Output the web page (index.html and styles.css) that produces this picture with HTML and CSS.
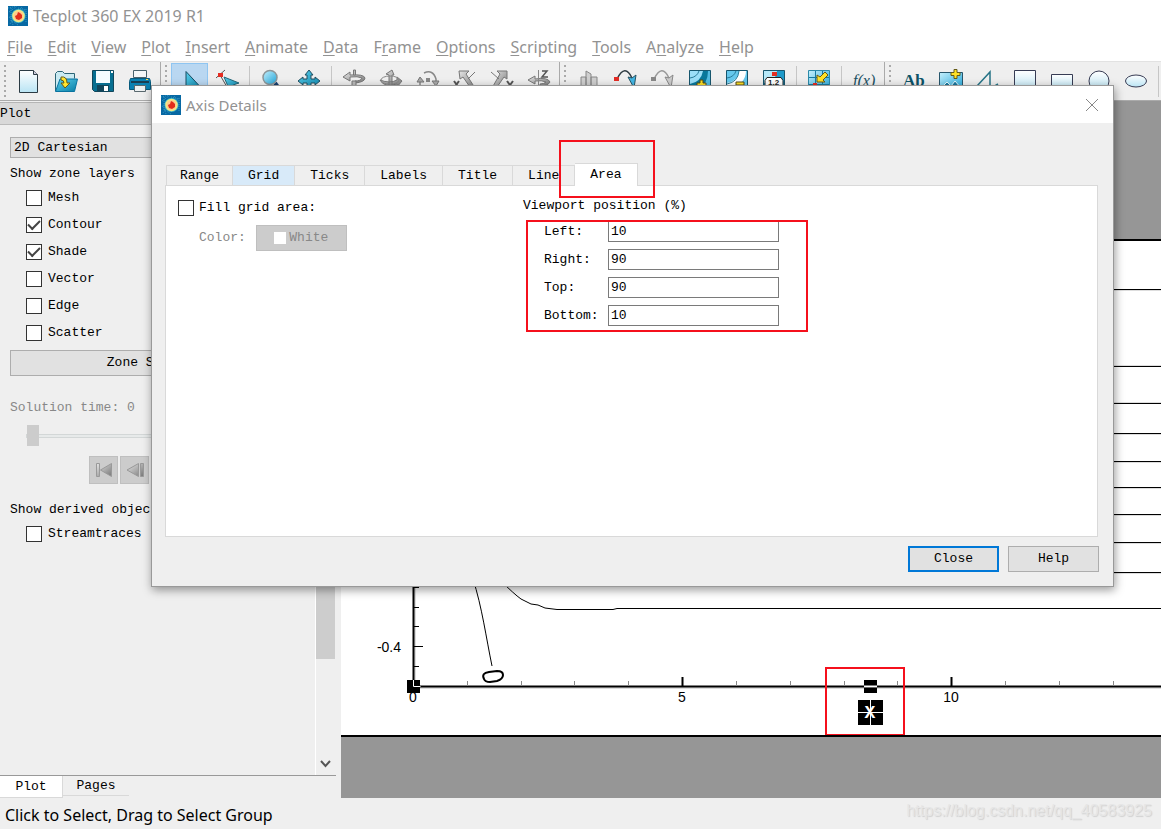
FILE: index.html
```
<!DOCTYPE html>
<html lang="en">
<head>
<meta charset="utf-8">
<title>Tecplot 360 EX 2019 R1</title>
<link rel="stylesheet" href="styles.css">
</head>
<body>
<svg class="defs" aria-hidden="true">
  <defs>
    <linearGradient id="sky" x1="0" y1="0" x2="1" y2="1"><stop offset="0" stop-color="#c4effc"/><stop offset="1" stop-color="#1ea4d8"/></linearGradient>
    <linearGradient id="pale" x1="0" y1="0" x2="0" y2="1"><stop offset="0" stop-color="#fff"/><stop offset="1" stop-color="#b9e4f4"/></linearGradient>
    <linearGradient id="steel" x1="0" y1="0" x2="1" y2="1"><stop offset="0" stop-color="#e6e6e6"/><stop offset="1" stop-color="#777"/></linearGradient>
    <linearGradient id="teal" x1="0" y1="0" x2="1" y2="1"><stop offset="0" stop-color="#5bd0ec"/><stop offset="1" stop-color="#087ea6"/></linearGradient>
    <symbol id="logo" viewBox="0 0 20 20">
      <path fill="#0768a3" d="M0 0h20v20H0z"/>
      <path stroke="#3097c4" stroke-dasharray="1 1" d="M0 2l9-2M1 6l7-5M1 12l6-8M2 18l4-7M5 19l-3-9M10 19l-6-4M13 1l6 7M10 2l8 2M18 3v13M3 2v14"/>
      <circle cx="10.500" cy="10" r="7" fill="#42b8c7"/>
      <circle cx="10.500" cy="10" r="6.200" fill="#f5e884"/>
      <circle cx="10.500" cy="10" r="4.800" fill="#ffc98b"/>
      <path fill="#e12d1b" d="M10 6l2 1 2 2v3l-3 2-3-1-1-3 2-1z"/>
    </symbol>
  </defs>
</svg>
<div class="app">
  <header class="titlebar"><svg class="logo"><use href="#logo"/></svg><span>Tecplot 360 EX 2019 R1</span></header>
  <nav class="menubar">
    <a href="#file"><u>F</u>ile</a><a href="#edit"><u>E</u>dit</a><a href="#view"><u>V</u>iew</a><a href="#plot"><u>P</u>lot</a><a href="#insert"><u>I</u>nsert</a><a href="#animate"><u>A</u>nimate</a><a href="#data"><u>D</u>ata</a><a href="#frame">F<u>r</u>ame</a><a href="#options"><u>O</u>ptions</a><a href="#scripting"><u>S</u>cripting</a><a href="#tools"><u>T</u>ools</a><a href="#analyze">A<u>n</u>alyze</a><a href="#help"><u>H</u>elp</a>
  </nav>
  <div class="toolbar" role="toolbar" aria-label="Main tools">
    <div class="tool-group">
      <i class="grip"></i>
      <button class="tool" aria-label="New layout"><svg viewBox="0 0 24 24"><path fill="url(#pale)" stroke="#2b3b44" d="M2.500 1.500h14l4 4v18h-18z"/><path fill="#ccd" stroke="#2b3b44" d="M16.500 1.500v4h4"/></svg></button>
      <button class="tool" aria-label="Open"><svg viewBox="0 0 24 24"><path fill="#c9eaf2" stroke="#2d6677" d="M1.500 22V4.500l2-2h5l2 2h10v5"/><path fill="url(#teal)" stroke="#0873a0" d="M1.500 22.500L6 10h17.500l-3 12.500z"/><path fill="#ffe52f" stroke="#665b16" d="M7 8q6-1 6 6h3l-5 5-4-5h3q0-3-3-3z"/></svg></button>
      <button class="tool" aria-label="Save"><svg viewBox="0 0 24 24"><path fill="#076f91" stroke="#12475b" d="M1.500 1.500h21v21h-19l-2-2z"/><path fill="#f4fcff" d="M5 2h14v12H5z"/><path fill="#11465b" d="M6 16h12v6H6z"/><path fill="#fff" d="M13 17h4v5h-4zM20 2h2v2h-2z"/></svg></button>
      <button class="tool" aria-label="Print"><svg viewBox="0 0 24 24"><path fill="#f4f7f8" stroke="#49626c" d="M5.500 1.500h13v7h-13z"/><path fill="#0b81b2" stroke="#075a7c" d="M2.500 9.500h19l1 3v8h-21v-8z"/><path stroke="#1b3f53" stroke-width="2" d="M3 13h18"/><path fill="#eef2f3" stroke="#59686e" d="M6.500 16.500h11v6h-11z"/><path fill="#ffdf4d" d="M18 10h2v1h-2z"/></svg></button>
    </div>
    <div class="tool-group">
      <i class="grip"></i>
      <button class="tool is-on" aria-label="Select"><svg viewBox="0 0 24 24"><path fill="url(#teal)" stroke="#174b61" d="M8 1.500v19l5-4h9z"/></svg></button>
      <button class="tool" aria-label="Adjust"><svg viewBox="0 0 24 24"><path stroke="#555" d="M1 9l9-8M5 6l7 12"/><path fill="#e42d22" d="M3 4h5v4H3z"/><path fill="url(#teal)" stroke="#236778" d="M9 8l15 6-6 2-3 6z"/></svg></button>
      <i class="sep"></i>
      <button class="tool" aria-label="Zoom"><svg viewBox="0 0 24 24"><path stroke="#163f70" stroke-width="4" d="M15 14l5 7"/><circle cx="10" cy="8.500" r="7" fill="url(#sky)" stroke="#8c9699" stroke-width="1.500"/></svg></button>
      <button class="tool" aria-label="Translate"><svg viewBox="0 0 24 24"><path fill="url(#teal)" stroke="#234f61" d="M12 1l4 5h-2v4h4V8l5 4-5 4v-2h-4v4h2l-4 5-4-5h2v-4H6v2l-5-4 5-4v2h4V6H8z"/></svg></button>
      <i class="sep"></i>
      <button class="tool" aria-label="Rotate spherical"><svg viewBox="0 0 24 24"><path fill="url(#steel)" stroke="#777" d="M1 8l7-5v3q14-1 15 3 0 4-10 5v-2q6 0 7-3-4-2-12-1v4z"/><path fill="#bbb" stroke="#777" d="M11.500 1v5h2V1zM10 12h4v10h-4z"/></svg></button>
      <button class="tool" aria-label="Rotate rollerball"><svg viewBox="0 0 24 24"><path fill="url(#steel)" stroke="#777" d="M7 5l6-4 2 5h-2v14h-3V6zM1 11q10 4 17 0V8l5 4-5 6v-3q-13 4-17-4z"/><ellipse cx="11" cy="11" rx="9" ry="4" fill="none" stroke="#888"/></svg></button>
      <button class="tool" aria-label="Rotate twist"><svg viewBox="0 0 24 24"><path fill="none" stroke="#888" stroke-width="1.500" d="M4 20V9M8 4q9-4 12 6v4"/><path fill="#aaa" stroke="#777" d="M1 13l3-5 4 5zM16 12h7l-3 5z"/><path fill="#888" d="M10 9h4v4h-4z"/></svg></button>
      <button class="tool" aria-label="Rotate X"><svg viewBox="0 0 24 24"><path fill="url(#steel)" stroke="#777" d="M6 2h10l-3 3 9 14-3 2-9-13-3 2z"/><path stroke="#555" stroke-width="2" d="M1 12l5 7M6 12l-5 7"/><path stroke="#777" d="M22 3l-7 7"/></svg></button>
      <button class="tool" aria-label="Rotate Y"><svg viewBox="0 0 24 24"><path fill="url(#steel)" stroke="#777" d="M17 2H7l3 3-8 14 3 2 9-13 3 2z"/><path fill="none" stroke="#555" stroke-width="2" d="M17 12l3 4 3-4M20 16v5"/><path stroke="#777" d="M1 3l8 7"/></svg></button>
      <button class="tool" aria-label="Rotate Z"><svg viewBox="0 0 24 24"><path fill="url(#steel)" stroke="#777" d="M1 11l7-4v3q13-2 15 3-2 4-10 4v-2q4 0 6-2-4-2-11-1v3z"/><path fill="none" stroke="#555" stroke-width="1.500" d="M15 2h5l-5 6h6"/><path stroke="#888" d="M11.500 1v19"/></svg></button>
    </div>
    <div class="tool-group">
      <i class="grip"></i>
      <button class="tool" aria-label="Slice"><svg viewBox="0 0 24 24"><path fill="#cfcfcf" stroke="#888" d="M4 8h5v12H4zM9 2l5 3v17l-5-3zM14 8h6v11h-6z"/></svg></button>
      <button class="tool" aria-label="Streamtrace"><svg viewBox="0 0 24 24"><path fill="none" stroke="#303c43" stroke-width="1.500" d="M3 10Q11-6 18 9"/><path fill="#44b7e5" stroke="#285464" d="M14 8l4 1 4-3-2 13z"/><path fill="#e32d26" d="M0 8h5v4H0z"/></svg></button>
      <button class="tool" aria-label="Streamtrace end"><svg viewBox="0 0 24 24"><path fill="none" stroke="#999" stroke-width="1.500" d="M3 10Q11-6 18 9"/><path fill="#ccc" stroke="#888" d="M14 8l4 1 4-3-2 13z"/><path fill="#888" d="M0 8h5v4H0z"/></svg></button>
      <button class="tool" aria-label="Add contour"><svg viewBox="0 0 24 24"><path fill="#08789b" stroke="#17566e" d="M1.500 1.500h21v21h-21z"/><path fill="#9bdff8" d="M2 2h13Q13 13 2 15z"/><path fill="#53bce2" d="M20 2h2v20H10q10-8 10-20z"/><path fill="none" stroke="#287c9a" d="M2 9q7-1 9-7"/><path fill="#ffe126" stroke="#564d17" d="M12 11h3v3h3v3h-3v3h-3v-3H9v-3h3z"/></svg></button>
      <button class="tool" aria-label="Remove contour"><svg viewBox="0 0 24 24"><path fill="#65c8ed" stroke="#17566e" d="M1.500 1.500h21v21h-21z"/><path fill="#fff" d="M14 2h7q0 14-19 18v-6Q13 12 14 2z"/><path fill="none" stroke="#287c9a" d="M2 9q7-1 9-7M2 15q11-2 12-13"/><path fill="#ffe126" stroke="#564d17" d="M11 13h8v3h-8z"/></svg></button>
      <button class="tool" aria-label="Contour label"><svg viewBox="0 0 24 24"><path fill="#1e9aca" stroke="#17566e" d="M1.500 1.500h21v21h-21z"/><path fill="#b6e8f8" d="M2 2h13Q14 12 2 14z"/><path fill="#e42d22" d="M10 3h5v4h-5z"/><path fill="#fff" stroke="#222" d="M5 8.500h14l2 3v6H3v-6z"/><text class="micro" x="6" y="16">1.2</text></svg></button>
      <i class="sep"></i>
      <button class="tool" aria-label="Probe"><svg viewBox="0 0 24 24"><path fill="url(#sky)" stroke="#2c8aa9" d="M1.500 1.500h21v21h-21z"/><path stroke="#1679a0" d="M8.500 2v20M15.500 2v20M2 8.500h20M2 15.500h20"/><path fill="#e42d22" d="M6 14h4v4H6z"/><path fill="#ffe126" stroke="#665b16" d="M18 3l3 3-5 5 2 2h-8V6l3 2z"/></svg></button>
      <i class="sep"></i>
      <button class="tool" aria-label="Equations"><svg viewBox="0 0 24 24"><text class="fx" x="1" y="17">f(x)</text></svg></button>
    </div>
    <div class="tool-group">
      <i class="grip"></i>
      <button class="tool" aria-label="Text"><svg viewBox="0 0 24 24"><text class="ab" x="1" y="17">Ab</text></svg></button>
      <button class="tool" aria-label="Image"><svg viewBox="0 0 24 24"><path fill="url(#sky)" stroke="#27566c" d="M.500 3.500h23v18H.500z"/><path fill="#1b789f" stroke="#e4faff" d="M2 19l6-6 4 4 4-5 6 7"/><path fill="#ffe126" stroke="#665b16" d="M15 .500h3v3h3v3h-3v3h-3v-3h-3v-3h3z"/></svg></button>
      <button class="tool" aria-label="Polyline"><svg viewBox="0 0 24 24"><path fill="none" stroke="#277487" stroke-width="1.500" d="M1 17L14 3v17l8-5"/></svg></button>
      <button class="tool" aria-label="Square"><svg viewBox="0 0 24 24"><path fill="url(#pale)" stroke="#373c54" d="M1.500 1.500h21v21h-21z"/></svg></button>
      <button class="tool" aria-label="Rectangle"><svg viewBox="0 0 24 24"><path fill="url(#pale)" stroke="#373c54" d="M1.500 5.500h21v15h-21z"/></svg></button>
      <button class="tool" aria-label="Circle"><svg viewBox="0 0 24 24"><circle cx="12" cy="12" r="10" fill="url(#pale)" stroke="#373c54"/></svg></button>
      <button class="tool" aria-label="Ellipse"><svg viewBox="0 0 24 24"><ellipse cx="12" cy="12" rx="10.500" ry="6" fill="url(#pale)" stroke="#373c54"/></svg></button>
      <i class="sep"></i>
    </div>
  </div>

  <main class="workspace">
    <aside class="dock">
      <h2 class="dock-title">Plot</h2>
      <div class="dock-body">
        <div class="dock-content">
          <select class="combo" aria-label="Plot type"><option>2D Cartesian</option></select>
          <p class="section">Show zone layers</p>
          <div class="checks">
            <label><input type="checkbox">Mesh</label>
            <label><input type="checkbox" checked>Contour</label>
            <label><input type="checkbox" checked>Shade</label>
            <label><input type="checkbox">Vector</label>
            <label><input type="checkbox">Edge</label>
            <label><input type="checkbox">Scatter</label>
          </div>
          <button class="btn zone-style">Zone Style...</button>
          <label class="solution" for="time">Solution time: 0</label>
          <input class="slider" id="time" type="range" min="0" max="10" value="0" disabled>
          <div class="player">
            <button disabled aria-label="First"><svg viewBox="0 0 18 16"><path fill="url(#steel)" stroke="#999" d="M1.500 1.500h3v13h-3zM16.500 1.500v13L5.500 8z"/></svg></button>
            <button disabled aria-label="Back"><svg viewBox="0 0 18 16"><path fill="url(#steel)" stroke="#999" d="M14.500 1.500h3v13h-3zM12.500 1.500v13L1 8z"/></svg></button>
            <button disabled aria-label="Play"><svg viewBox="0 0 18 16"><path fill="url(#steel)" stroke="#999" d="M4.500 1.500v13L15 8z"/></svg></button>
          </div>
          <p class="section derived">Show derived objects</p>
          <div class="checks"><label><input type="checkbox">Streamtraces</label></div>
        </div>
        <div class="scroll">
          <div class="scroll-thumb"></div>
          <svg class="scroll-arrow" viewBox="0 0 11 8"><path fill="none" stroke="#555" stroke-width="2" d="M1 1l4.500 5L10 1"/></svg>
        </div>
      </div>
      <div class="dock-tabs" role="tablist"><button class="is-active" role="tab">Plot</button><button role="tab">Pages</button></div>
    </aside>

    <section class="canvas" aria-label="Plot canvas">
      <div class="frame">
        <svg class="plot">
          <g transform="translate(-341 -241)">
            <path class="iso-shade" d="M1000 290.500h3000M1000 365.500h3000M1000 402.500h3000M1000 434.500h3000M1000 462.500h3000M1000 488.500h3000M1000 515.500h3000M1000 543.500h3000M1000 573.500h3000"/>
            <path class="iso" d="M1000 289.500h3000M1000 366.500h3000M1000 403.500h3000M1000 433.500h3000M1000 461.500h3000M1000 487.500h3000M1000 514.500h3000M1000 542.500h3000M1000 572.500h3000"/>
            <path class="iso" d="M500 580Q514 594 521 599L531 604 538 605 545 608 557 609.500H613L617 608.500H4000M473 579C482 607 486 637 492 666"/>
            <path class="digit" d="M484 679q-3-6 5-7l8-1q6 0 6 4t-6 6l-7 1q-5 0-6-3z"/>
            <path class="axis-shade" d="M415 560v126M413 688h3600"/>
            <path class="axis" d="M413.500 560v127M413 686.500h3600"/>
            <path class="tick" d="M414 587.500h5M414 607.500h5M414 626.500h5M414 646.500h9M414 666.500h5"/>
            <path class="minor" d="M467.500 681v5M521.500 681v5M574.500 681v5M628.500 681v5M736.500 681v5M790.500 681v5M844.500 681v5M897.500 681v5M1005.500 681v5M1059.500 681v5M1113.500 681v5"/>
            <path class="axis" d="M682.500 677v9M951.500 677v9"/>
            <path d="M407 680h13v13h-13zM864 680h13v5h-13zM864 688h13v5h-13zM858 700h12v12h-12zM871 700h12v12h-12zM858 713h12v12h-12zM871 713h12v12h-12z"/>
            <path class="cross" d="M413.500 680v6.500h7M864 686.500h13"/>
            <text class="axis-label" x="401" y="652" text-anchor="end">-0.4</text>
            <text class="axis-label" x="413" y="702" text-anchor="middle">0</text>
            <text class="axis-label" x="682" y="702" text-anchor="middle">5</text>
            <text class="axis-label" x="951" y="702" text-anchor="middle">10</text>
            <text class="x-title" x="870" y="718" text-anchor="middle">X</text>
            <rect class="mark-line" x="826" y="668" width="78" height="67"/>
          </g>
        </svg>
      </div>
    </section>
  </main>
  <footer class="statusbar"><span>Click to Select, Drag to Select Group</span><span class="watermark">https://blog.csdn.net/qq_40583925</span></footer>
</div>

<section class="dialog" role="dialog" aria-labelledby="dlg-title">
  <header class="dialog-title">
    <svg class="logo"><use href="#logo"/></svg><h1 id="dlg-title">Axis Details</h1>
    <button class="close" aria-label="Close dialog"><svg viewBox="0 0 14 14"><path stroke="#888" d="M1 1l12 12M13 1L1 13"/></svg></button>
  </header>
  <div class="dialog-body">
    <div class="tabs" role="tablist">
      <button role="tab">Range</button><button role="tab" class="is-hover">Grid</button><button role="tab">Ticks</button><button role="tab">Labels</button><button role="tab">Title</button><button role="tab">Line</button><button role="tab" class="is-active">Area<span class="mark mark-tab"></span></button>
    </div>
    <div class="panel" role="tabpanel">
      <div class="fill">
        <label class="fill-check"><input type="checkbox">Fill grid area:</label>
        <div class="color-row"><span>Color:</span><button disabled><i></i>White</button></div>
      </div>
      <div class="viewport">
        <p>Viewport position (%)</p>
        <div class="fields">
          <label for="l">Left:</label><input id="l" type="text" value="10">
          <label for="r">Right:</label><input id="r" type="text" value="90">
          <label for="t">Top:</label><input id="t" type="text" value="90">
          <label for="b">Bottom:</label><input id="b" type="text" value="10">
          <span class="mark mark-fields"></span>
        </div>
      </div>
    </div>
    <div class="actions"><button class="btn is-default">Close</button><button class="btn">Help</button></div>
  </div>
</section>
</body>
</html>
```
FILE: styles.css
```
* { box-sizing: border-box; }
body { margin: 0; background: #efefef; color: #000; font: 13px/20px "Liberation Mono", monospace; overflow: hidden; }
button, input, select { font: inherit; color: inherit; margin: 0; padding: 0; border-radius: 0; }
p, h1, h2 { margin: 0; font-size: inherit; font-weight: normal; }
.defs { position: absolute; width: 0; height: 0; }
.app { display: flex; flex-direction: column; height: 100vh; }
.logo { width: 20px; height: 20px; flex: none; }

.titlebar { display: flex; align-items: center; gap: 5px; height: 32px; flex: none; padding-left: 8px; background: #fff; color: #929292; font: 16px/20px "Noto Sans", sans-serif; }
.menubar { display: flex; gap: 15px; height: 29px; flex: none; align-items: center; padding-left: 7px; background: #fff; font: 16px/20px "Noto Sans", sans-serif; }
.menubar a { color: #929292; text-decoration: none; white-space: nowrap; }
.menubar u { text-underline-offset: 2px; }

.toolbar { display: flex; height: 40px; flex: none; border-top: 1px solid #e2e2e2; border-bottom: 1px solid #aaa; overflow: hidden; }
.tool-group { display: flex; align-items: stretch; border-right: 1px solid #aaa; padding-right: 2px; }
.tool-group:last-child { border-right: 0; }
.grip { width: 2px; margin: 3px 4px; background: repeating-linear-gradient(#aaa 0 2px, transparent 2px 5px); }
.sep { width: 1px; margin: 4px 3px 3px 4px; background: #c6c6c6; }
.tool { width: 37px; border: 1px solid transparent; background: none; padding: 0; display: flex; justify-content: center; align-items: center; }
.tool svg { width: 24px; height: 24px; flex: none; fill: none; }
.tool.is-on { background: #b9d7f1; border-color: #8fc5f1; margin-top: 1px; }
.micro { font: bold 8px "Liberation Sans", sans-serif; fill: #222; }
.fx { font: italic 16px "Liberation Serif", serif; fill: #204f62; }
.ab { font: bold 17px "Liberation Serif", serif; fill: #0c5368; }

.workspace { display: flex; flex: 1; min-height: 0; }
.dock { width: 336px; flex: none; display: flex; flex-direction: column; margin-right: 5px; }
.dock-title { height: 23px; margin-top: 1px; border-top: 1px solid #b5b5b5; border-bottom: 1px solid #bbb; background: #d9d9d9; line-height: 22px; }
.dock-body { flex: 1; display: flex; min-height: 0; border-bottom: 1px solid #999; }
.dock-content { flex: 1; padding: 12px 10px 0; overflow: hidden; }
.combo { display: block; width: 100%; height: 21px; padding-left: 3px; border: 1px solid #adadad; background: #e1e1e1; appearance: none; }
.section { margin-top: 6px; }
.checks { padding-left: 16px; }
.checks label { display: flex; align-items: center; gap: 6px; height: 27px; }
input[type="checkbox"] { appearance: none; width: 16px; height: 16px; flex: none; border: 1px solid #333; background: #fff; display: grid; place-items: center; }
input[type="checkbox"]:checked::before { content: ""; width: 10px; height: 5px; border: solid #444; border-width: 0 0 2px 2px; transform: translateY(-1px) rotate(-45deg); }
.btn { height: 26px; width: 91px; border: 1px solid #adadad; background: #e1e1e1; }
.btn.is-default { border: 2px solid #0078d7; }
.zone-style { display: block; width: 100%; margin-top: 4px; }
.solution { display: block; margin-top: 22px; color: #888; }
.slider { display: block; appearance: none; width: 260px; height: 20px; margin: 8px 0 0 16px; background: none; }
.slider::-webkit-slider-runnable-track { height: 4px; border: 1px solid #d3d7d7; background: #e7eaea; }
.slider::-webkit-slider-thumb { appearance: none; width: 12px; height: 21px; margin-top: -10px; background: #ccc; }
.player { display: flex; gap: 2px; margin: 10px 0 0 79px; }
.player button { width: 29px; height: 28px; border: 1px solid #bfbfbf; background: #ccc; display: grid; place-items: center; }
.player svg { width: 18px; height: 16px; }
.derived { margin-top: 16px; white-space: nowrap; }
.scroll { width: 21px; border-left: 1px solid #fff; display: flex; flex-direction: column; align-items: center; justify-content: space-between; padding: 0 2px 7px 0; }
.scroll-thumb { width: 19px; height: 83%; background: #cdcdcd; }
.scroll-arrow { width: 11px; height: 8px; }
.dock-tabs { display: flex; align-items: flex-start; height: 22px; }
.dock-tabs button { border: solid #d9d9d9; border-width: 0 0 1px; height: 20px; width: 66px; background: none; }
.dock-tabs .is-active { width: 63px; height: 22px; border-right-width: 1px; background: #fff; }

.canvas { flex: 1; min-width: 0; display: flex; flex-direction: column; padding: 138px 0 61px; background: #969696; }
.frame { flex: 1; border: solid #000; border-width: 2px 0; background: #fff; display: flex; min-height: 0; }
.plot { width: 100%; height: 100%; fill: none; }
.plot path { fill: #000; }
.plot .iso, .plot .iso-shade, .plot .digit, .plot .axis, .plot .axis-shade, .plot .tick, .plot .minor, .plot .cross { fill: none; stroke: #000; stroke-width: 1; }
.plot .iso-shade { stroke: #ddd; }
.plot .digit { stroke-width: 2; }
.plot .axis { stroke-width: 2; }
.plot .axis-shade { stroke: #bbb; }
.plot .minor { stroke: #888; }
.plot .cross { stroke: #fff; }
.axis-label { font: 14px "Liberation Sans", sans-serif; fill: #000; }
.x-title { font: bold 18px "Liberation Mono", monospace; fill: #fff; }
.mark-line { stroke: #f5101c; stroke-width: 2; }

.statusbar { height: 31px; flex: none; display: flex; justify-content: space-between; align-items: center; padding: 3px 9px 0 5px; font: 16px/20px "Noto Sans", sans-serif; }
.watermark { font: 16px/20px "Liberation Sans", sans-serif; color: #e6e6e6; text-shadow: 1px 1px 1px #d0d0d0; margin-top: -8px; }

.dialog { position: absolute; left: 151px; right: 47px; top: 85px; border: 1px solid #999; background: #efefef; box-shadow: 1px 3px 9px rgba(0, 0, 0, .4); }
.dialog-title { display: flex; align-items: center; gap: 5px; height: 37px; padding: 0 14px 0 9px; background: #fff; color: #929292; font: 15px/20px "Noto Sans", sans-serif; }
.close { margin-left: auto; width: 14px; height: 14px; border: 0; background: none; display: flex; }
.close svg { width: 14px; height: 14px; }
.dialog-body { padding: 40px 15px 14px 13px; }
.tabs { display: flex; align-items: flex-end; height: 22px; padding-left: 1px; }
.tabs button { height: 20px; padding: 0 15px; border: solid #d9d9d9; border-width: 1px 1px 0 0; background: none; line-height: 20px; }
.tabs button:first-child { padding: 0 13px; border-left-width: 1px; }
.tabs .is-hover { background: #d8eaf9; }
.tabs .is-active { position: relative; height: 23px; margin-bottom: -1px; background: #fff; }
.mark { position: absolute; border: 2px solid #f5101c; pointer-events: none; }
.mark-tab { inset: -24px -18px -12px -16px; }
.panel { display: grid; grid-template-columns: 345px 1fr; min-height: 352px; padding: 10px 12px; border: 1px solid #d9d9d9; background: #fff; }
.fill-check { display: flex; align-items: center; gap: 5px; height: 24px; }
.color-row { display: flex; align-items: center; gap: 10px; margin-top: 5px; padding-left: 21px; color: #888; }
.color-row button { display: flex; align-items: center; justify-content: center; gap: 3px; width: 91px; height: 26px; border: 1px solid #bfbfbf; background: #ccc; }
.color-row i { width: 12px; height: 12px; background: #fff; }
.fields { position: relative; display: grid; grid-template-columns: 64px 171px; gap: 7px 0; align-items: center; width: 282px; margin: 5px 0 0 3px; padding-left: 18px; }
.fields input { width: 100%; height: 21px; border: 1px solid #7a7a7a; background: #fff; padding-left: 2px; }
.mark-fields { inset: -1px 0 -6px 0; }
.actions { display: flex; justify-content: flex-end; gap: 9px; padding-top: 9px; margin-right: -1px; }
```
